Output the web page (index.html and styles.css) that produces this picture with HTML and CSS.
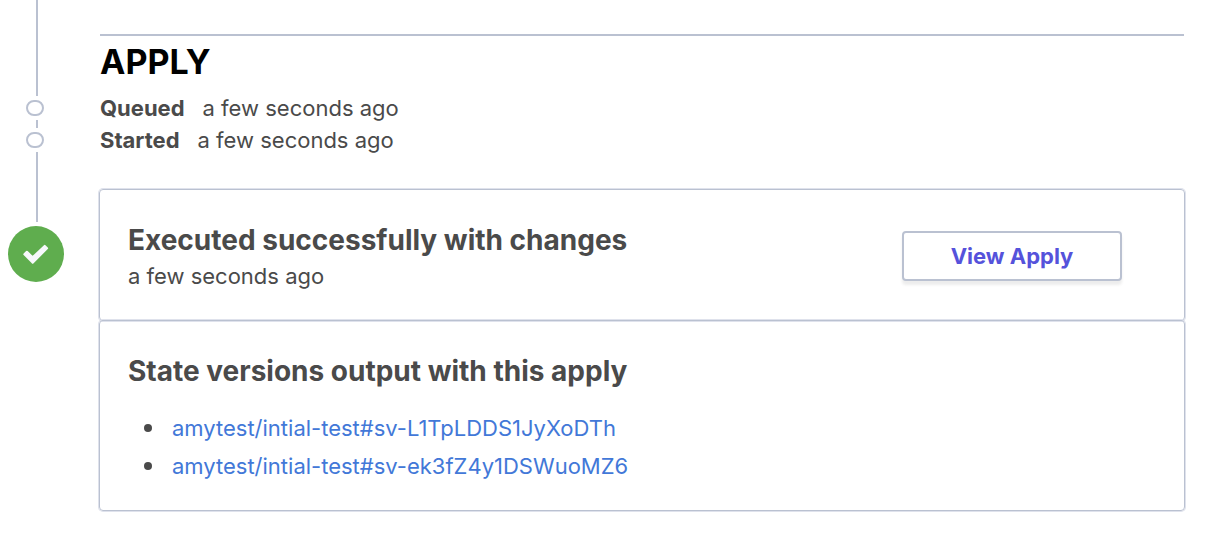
FILE: index.html
```html
<!DOCTYPE html>
<html lang="en">
<head>
<meta charset="utf-8">
<meta name="viewport" content="width=device-width, initial-scale=1">
<title>Apply</title>
<link rel="stylesheet" href="styles.css">
</head>
<body>
<main class="stage">
  <div class="rail" aria-hidden="true">
    <span class="line line-top"></span>
    <span class="dot"></span>
    <span class="line line-short"></span>
    <span class="dot"></span>
    <span class="line line-mid"></span>
    <svg class="status" viewBox="0 0 56 56">
      <circle cx="28" cy="28" r="28" fill="#5fad4e"/>
      <path d="M16.4 28.2 18.9 25.8 24.6 31.4 36.7 20 39 22.3 24.6 36.6Z" fill="#f7f8fc" stroke="#f7f8fc" stroke-width="2.2" stroke-linejoin="round"/>
    </svg>
  </div>
  <section class="content">
    <h1 class="heading">APPLY</h1>
    <dl class="times">
      <div class="time"><dt>Queued</dt><dd>a few seconds ago</dd></div>
      <div class="time"><dt>Started</dt><dd>a few seconds ago</dd></div>
    </dl>
    <div class="cards">
      <div class="card result">
        <div>
          <h2 class="title">Executed successfully with changes</h2>
          <p class="when">a few seconds ago</p>
        </div>
        <button class="button" type="button">View Apply</button>
      </div>
      <div class="card outputs">
        <h2 class="title">State versions output with this apply</h2>
        <ul class="versions">
          <li><a href="#sv-L1TpLDDS1JyXoDTh">amytest/intial-test#sv-L1TpLDDS1JyXoDTh</a></li>
          <li><a href="#sv-ek3fZ4y1DSWuoMZ6">amytest/intial-test#sv-ek3fZ4y1DSWuoMZ6</a></li>
        </ul>
      </div>
    </div>
  </section>
</main>
</body>
</html>
```

FILE: styles.css
```css
* {
  box-sizing: border-box;
}

body {
  margin: 0;
  background: #fff;
  color: #4a4a4a;
  font: 22px/32px Inter, "Liberation Sans", sans-serif;
}

h1, h2, p, dl, dd, ul {
  margin: 0;
  padding: 0;
}

.stage {
  display: grid;
  grid-template-columns: 56px 1fr;
  column-gap: 36px;
  padding: 0 24px 24px 8px;
}

.rail {
  display: flex;
  flex-direction: column;
  gap: 4px;
}

.line {
  width: 2px;
  margin-left: 28px;
  background: #bac1d1;
}

.line-top {
  height: 96px;
}

.line-short {
  height: 8px;
}

.line-mid {
  height: 70px;
}

.dot {
  width: 18px;
  height: 16px;
  margin-left: 18px;
  border: 2px solid #bac1d1;
  border-radius: 8px;
}

.status {
  width: 56px;
  height: 56px;
}

.content {
  margin-top: 34px;
  border-top: 2px solid #bac1d1;
}

.heading {
  padding: 6px 0 10px;
  color: #000;
  font-size: 34px;
  line-height: 40px;
  font-weight: 700;
}

.time {
  display: flex;
  gap: 18px;
}

.time dt {
  font-weight: 700;
}

.cards {
  margin: 33px -1px 0;
}

.card {
  padding: 30px 28px 28px;
  border: 1px solid #bac1d1;
  border-radius: 4px;
  box-shadow: 0 0 0 1px #dfe2ec;
}

.result {
  display: flex;
  align-items: center;
  justify-content: space-between;
  padding-right: 62px;
}

.outputs {
  margin-top: -1px;
  padding-bottom: 25px;
}

.title {
  font-size: 28px;
  line-height: 40px;
  font-weight: 700;
}

.button {
  width: 220px;
  height: 50px;
  padding: 0;
  border: 2px solid #bac1d1;
  border-radius: 4px;
  background: #fff;
  box-shadow: 0 4px 3px #ededed;
  color: #5552db;
  font: inherit;
  font-weight: 700;
}

.versions {
  padding: 18px 0 0 16px;
  list-style: none;
}

.versions li {
  display: flex;
  align-items: center;
  gap: 20px;
  line-height: 38px;
}

.versions li::before {
  content: "";
  width: 8px;
  height: 8px;
  border-radius: 50%;
  background: #4a4a4a;
}

.versions a {
  color: #4278d8;
  text-decoration: none;
}
```
